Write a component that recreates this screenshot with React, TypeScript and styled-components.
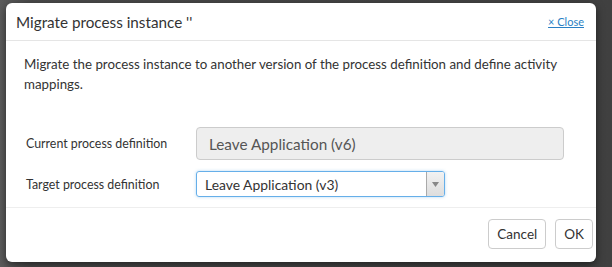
import styled, { createGlobalStyle } from 'styled-components';

const GlobalStyle = createGlobalStyle`
  html, body {
    margin: 0;
    padding: 0;
    background: #4a4a4a;
  }

  body {
    font-family: Lato, 'Liberation Sans', sans-serif;
    color: #333;
  }
`;

const App = () => {
  return (
    <>
      <GlobalStyle />
      <Backdrop>
        <Modal>
          <Header>
            <Title>Migrate process instance ''</Title>
            <CloseLink href="#">× Close</CloseLink>
          </Header>
          <Body>
            <Intro>
              Migrate the process instance to another version of the process definition and define
              activity mappings.
            </Intro>
            <FormRow>
              <Label>Current process definition</Label>
              <ReadOnlyField>Leave Application (v6)</ReadOnlyField>
            </FormRow>
            <FormRow $compact>
              <Label>Target process definition</Label>
              <Select>
                <span>Leave Application (v3)</span>
                <Caret>
                  <svg width="7" height="5" viewBox="0 0 7 5">
                    <path d="M0 0h7L3.5 5z" fill="#888" />
                  </svg>
                </Caret>
              </Select>
            </FormRow>
          </Body>
          <Footer>
            <Button>Cancel</Button>
            <Button>OK</Button>
          </Footer>
        </Modal>
      </Backdrop>
    </>
  );
};

const Backdrop = styled.div`
  height: 267px;
  padding: 3px 16px 0 6px;
  box-sizing: border-box;
  background: linear-gradient(90deg, #5c5c5c 0, #4a4a4a 30px, #404040 100%);
`;

const Modal = styled.div`
  background: #fff;
  border-radius: 6px;
  box-shadow: 0 3px 9px rgba(0, 0, 0, 0.5);
`;

const Header = styled.div`
  display: flex;
  align-items: center;
  justify-content: space-between;
  height: 37px;
  padding: 0 12px 0 10px;
  border-bottom: 1px solid #e5e5e5;
`;

const Title = styled.h4`
  margin: 0;
  font-size: 15.25px;
  font-weight: 400;
  color: #333;
`;

const CloseLink = styled.a`
  font-size: 11px;
  color: #2a7fc4;
  text-decoration: underline;
`;

const Body = styled.div`
  padding: 13px 18px 10px 18px;
  border-bottom: 1px solid #eee;
`;

const Intro = styled.p`
  margin: 0 0 33px;
  font-size: 13.3px;
  line-height: 20px;
  color: #333;
`;

const FormRow = styled.div<{ $compact?: boolean }>`
  display: flex;
  align-items: center;
  margin-bottom: ${({ $compact }) => ($compact ? '0' : '11px')};
`;

const Label = styled.label`
  width: 172px;
  box-sizing: border-box;
  padding-left: 2px;
  font-size: 12.4px;
  color: #333;
`;

const ReadOnlyField = styled.div`
  width: 368px;
  height: 33px;
  box-sizing: border-box;
  display: flex;
  align-items: center;
  padding: 0 12px;
  background: #eee;
  border: 1px solid #ccc;
  border-radius: 4px;
  font-size: 15.3px;
  color: #555;
`;

const Select = styled.div`
  width: 249px;
  height: 26px;
  box-sizing: border-box;
  display: flex;
  align-items: center;
  justify-content: space-between;
  padding-left: 8px;
  border: 1px solid #66afe9;
  border-radius: 3px;
  box-shadow: 0 0 3px rgba(102, 175, 233, 0.5);
  font-size: 13.9px;
  color: #333;
  overflow: hidden;
`;

const Caret = styled.span`
  display: flex;
  align-items: center;
  justify-content: center;
  width: 17px;
  height: 100%;
  border-left: 1px solid #aaa;
  background: linear-gradient(#f2f2f2, #ddd);
`;

const Footer = styled.div`
  display: flex;
  justify-content: flex-end;
  gap: 9px;
  padding: 11px 3px 13px 0;
`;

const Button = styled.button`
  height: 30px;
  padding: 0 8px;
  background: #fff;
  border: 1px solid #ccc;
  border-radius: 4px;
  font-family: Lato, 'Liberation Sans', sans-serif;
  font-size: 13.5px;
  color: #333;
`;

export default App;
